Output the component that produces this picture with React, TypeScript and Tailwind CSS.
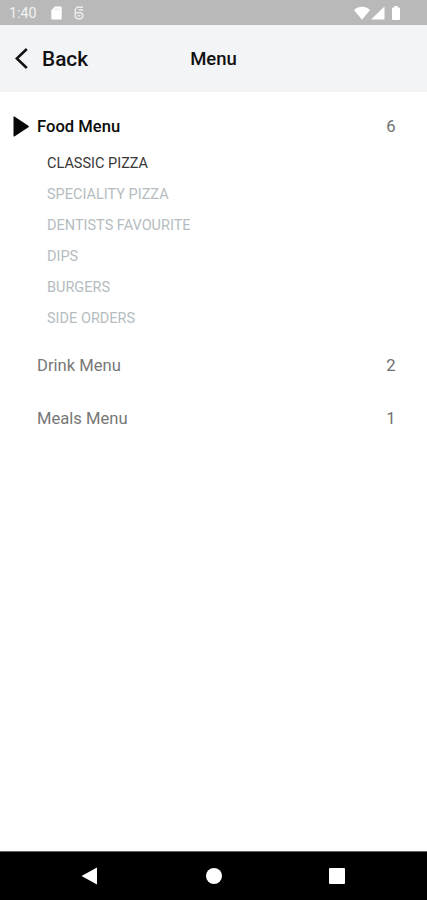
import React, { useState } from "react";

type MenuSection = {
  name: string;
  count: number;
  items: string[];
};

const SECTIONS: MenuSection[] = [
  {
    name: "Food Menu",
    count: 6,
    items: [
      "CLASSIC PIZZA",
      "SPECIALITY PIZZA",
      "DENTISTS FAVOURITE",
      "DIPS",
      "BURGERS",
      "SIDE ORDERS",
    ],
  },
  { name: "Drink Menu", count: 2, items: [] },
  { name: "Meals Menu", count: 1, items: [] },
];

function StatusBar() {
  return (
    <div className="flex h-[25px] shrink-0 items-center bg-[#b9b9b9] pl-[9px] pr-[27px] text-white">
      <span className="w-[42px] pt-px text-[14.3px] leading-none text-[#f2f2f2]">1:40</span>
      <svg width="11" height="14" viewBox="0 0 11 14" fill="currentColor">
        <path d="M4 .5h5.500a1.200 1.200 0 0 1 1.200 1.200v10.600a1.200 1.200 0 0 1-1.200 1.200h-8A1.200 1.200 0 0 1 .3 12.300V4.200z" />
        <path d="M4 2.500v2M6 2.500v2M8 2.500v2" stroke="#dedede" strokeWidth=".8" />
      </svg>
      <svg
        className="ml-3"
        width="10"
        height="14"
        viewBox="0 0 10 14"
        fill="none"
        stroke="#ededed"
        strokeWidth="1.400"
      >
        <path d="M9 1.300H3.200L1.200 3.300V11L3 12.700h4L8.800 11V8.500L7 6.700H1.200" />
        <path d="M4.500 4H9M3.500 9.700h3" />
      </svg>

      <div className="ml-auto flex items-center">
        <svg width="16" height="14" viewBox="0 0 16 14" fill="currentColor">
          <path d="M0 4C4.500-.2 11.500-.2 16 4L8 13.800z" />
        </svg>
        <svg className="ml-px" width="14" height="14" viewBox="0 0 14 14" fill="currentColor">
          <path d="M13.500.5v13H0z" />
        </svg>
        <svg className="ml-[7px]" width="8" height="14" viewBox="0 0 8 14" fill="currentColor">
          <path d="M2.300 0h3.400v1.500H7a1 1 0 0 1 1 1V13a1 1 0 0 1-1 1H1a1 1 0 0 1-1-1V2.500a1 1 0 0 1 1-1h1.300z" />
        </svg>
      </div>
    </div>
  );
}

function Header() {
  return (
    <header className="grid h-[67px] shrink-0 grid-cols-3 items-center bg-[#f3f4f6] text-[#111111]">
      <button type="button" className="flex items-center pl-[15px]">
        <svg
          width="13"
          height="21"
          viewBox="0 0 13 21"
          fill="none"
          stroke="currentColor"
          strokeWidth="2.500"
        >
          <path d="M11.800 1L1.800 10.500l10 9.500" />
        </svg>
        <span className="ml-[14px] text-[20.8px] font-medium leading-6">Back</span>
      </button>
      <h1 className="text-center text-[18.5px] font-medium leading-6">Menu</h1>
    </header>
  );
}

function SectionRow({
  section,
  open,
  onSelect,
}: {
  section: MenuSection;
  open: boolean;
  onSelect: () => void;
}) {
  return (
    <button
      type="button"
      onClick={onSelect}
      className={`flex w-full items-center pl-[13px] pr-[31.5px] text-[16.6px] leading-5 ${
        open ? "h-[45px]" : "h-[53px]"
      }`}
    >
      <span className="w-6">
        {open ? (
          <svg width="17" height="21" viewBox="0 0 17 21" fill="#080808">
            <path d="M.5 1.200Q.5-.2 1.800.7l13.600 9q1 .8 0 1.600l-13.600 9q-1.300.8-1.300-.6z" />
          </svg>
        ) : null}
      </span>
      <span className={open ? "font-medium text-[#0c0c0c]" : "text-[#777777]"}>{section.name}</span>
      <span className="ml-auto text-[#707070]">{section.count}</span>
    </button>
  );
}

function NavigationBar() {
  return (
    <nav className="flex h-[49px] shrink-0 items-center justify-between border-t border-[#666666] bg-black pl-[81px] pr-[82px] text-white">
      <svg width="17" height="18" viewBox="0 0 17 18" fill="currentColor">
        <path d="M16 .5v17L.5 9z" />
      </svg>
      <span className="size-4 rounded-full bg-white" />
      <span className="size-4 rounded-[1px] bg-white" />
    </nav>
  );
}

export default function App() {
  const [openSection, setOpenSection] = useState("Food Menu");
  const [activeItem, setActiveItem] = useState("CLASSIC PIZZA");

  return (
    <div className="flex h-screen w-full flex-col overflow-hidden bg-white font-['Roboto',sans-serif]">
      <StatusBar />
      <Header />
      <main className="flex-1 pt-3">
        {SECTIONS.map((section) => {
          const open = section.name === openSection;
          return (
            <section key={section.name}>
              <SectionRow
                section={section}
                open={open}
                onSelect={() => setOpenSection(section.name)}
              />
              {open && section.items.length > 0 ? (
                <ul className="-mt-px pb-[5px] pl-[47px]">
                  {section.items.map((item) => (
                    <li key={item} className="h-[31px]">
                      <button
                        type="button"
                        onClick={() => setActiveItem(item)}
                        className={`h-full text-[14.5px] leading-5 ${
                          item === activeItem ? "text-[#383838]" : "text-[#b5bcc0]"
                        }`}
                      >
                        {item}
                      </button>
                    </li>
                  ))}
                </ul>
              ) : null}
            </section>
          );
        })}
      </main>
      <NavigationBar />
    </div>
  );
}
